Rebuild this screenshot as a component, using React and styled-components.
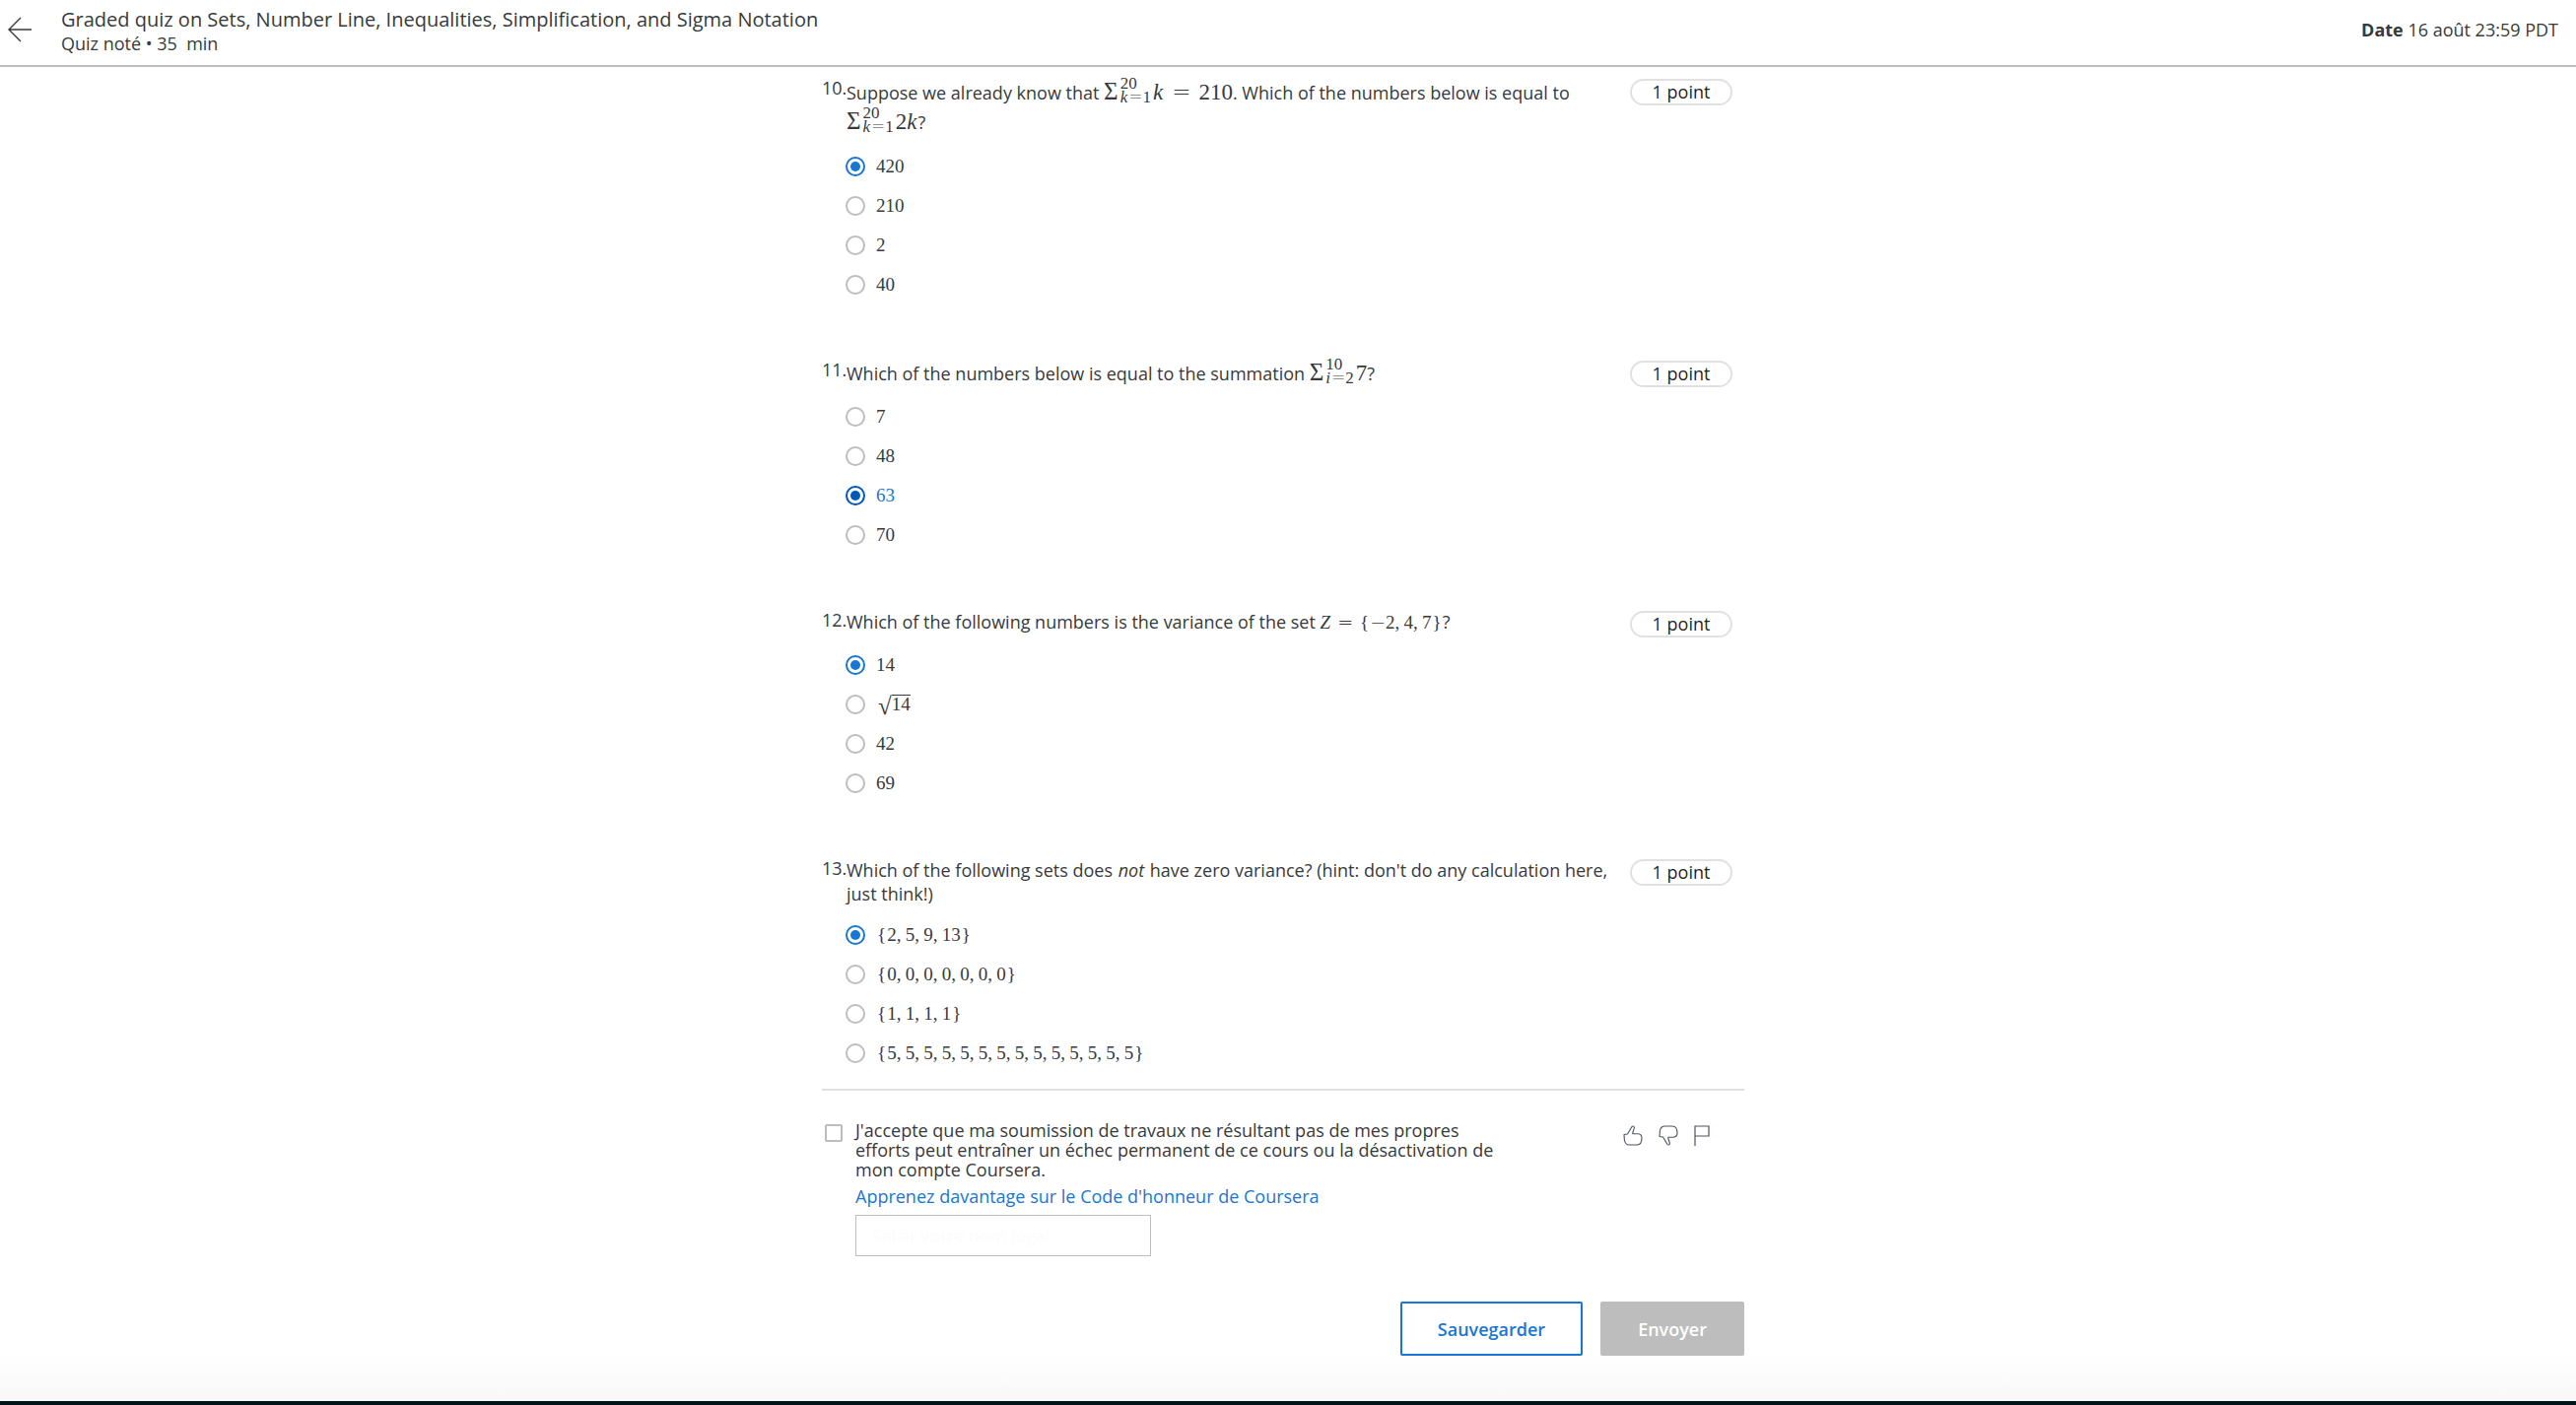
import React, { useState } from "react";
import styled, { createGlobalStyle } from "styled-components";

const ink = "#373a3c";
const blue = "#1976d2";
const grey = "#bdbdbd";
const paleGrey = "#e1e1e1";

const GlobalStyle = createGlobalStyle`
  *, *::before, *::after { box-sizing: border-box; }
  body {
    margin: 0;
    background: #fff;
    color: ${ink};
    font-family: "Open Sans", "Noto Sans", sans-serif;
    font-size: 18px;
  }
`;

const Page = styled.div`
  display: flex;
  flex-direction: column;
  min-height: 100vh;
`;

const Header = styled.header`
  display: flex;
  align-items: center;
  gap: 30px;
  height: 68px;
  padding: 0 18px 6px 8px;
  border-bottom: 2px solid ${grey};
`;

const BackButton = styled.button`
  display: flex;
  padding: 0;
  border: 0;
  background: none;
  color: ${ink};
  cursor: pointer;
`;

const Heading = styled.div`
  flex: 1;
  padding-top: 3px;
`;

const Title = styled.h1`
  margin: 0;
  font-size: 20px;
  font-weight: 400;
  line-height: 24px;
`;

const Subtitle = styled.p`
  margin: 0;
  line-height: 24px;
  white-space: pre;
`;

const DueDate = styled.p`
  margin: 0;
  line-height: 24px;
`;

const Main = styled.main`
  display: flex;
  flex: 1;
  justify-content: center;
  padding: 11px 10px 40px 0;
  background: linear-gradient(to top, #f8f8f8, #fff 48px);
`;

const Form = styled.form`
  width: 100%;
  max-width: 936px;
`;

const QuestionList = styled.ol`
  display: flex;
  flex-direction: column;
  gap: 56px;
  margin: 0;
  padding: 0 0 16px;
  border-bottom: 2px solid ${paleGrey};
  list-style: none;
`;

const Question = styled.li`
  display: grid;
  grid-template-columns: 25px minmax(0, 1fr) 104px;
  padding-right: 12px;
`;

const Number = styled.span`
  line-height: 20px;
`;

const Body = styled.div`
  padding-right: 16px;
`;

const Prompt = styled.p`
  margin: 0 0 10px;
  line-height: 24px;

  em { margin: 0 1px; }
`;

const Points = styled.span`
  align-self: start;
  margin-top: 1px;
  border: 2px solid ${paleGrey};
  border-radius: 14px;
  color: #1f1f1f;
  line-height: 23px;
  text-align: center;
`;

const Option = styled.label`
  display: flex;
  align-items: center;
  gap: 11px;
  height: 40px;
  color: ${(p) => (p.$active ? blue : ink)};
  cursor: pointer;
`;

const Radio = styled.input`
  appearance: none;
  width: 20px;
  height: 20px;
  margin: 0 0 0 -1px;
  padding: 3px;
  border: 2px solid ${grey};
  border-radius: 50%;
  background: #fff;

  &:checked {
    border-color: ${(p) => (p.$active ? "#0057b8" : blue)};
    background: ${(p) => (p.$active ? "#0057b8" : blue)} content-box;
  }
`;

const Math = styled.span`
  font-family: "Liberation Serif", "Times New Roman", serif;
  font-size: ${(p) => (p.$large ? 23 : 19)}px;
  line-height: ${(p) => p.$line || 24}px;
  white-space: nowrap;

  i { margin-right: 1px; }
`;

const Sigma = styled.span`
  font-size: 25px;
  line-height: 0;
`;

const Scripts = styled.span`
  display: inline-flex;
  flex-direction: column;
  margin: -2px 2px 0;
  font-size: 17px;
  line-height: 14px;
  vertical-align: 11px;
`;

const Relation = styled.span`
  margin: 0 ${(p) => p.$gap || 0}px;
  font-family: "DejaVu Sans", sans-serif;
  font-weight: 200;
  line-height: 0;
`;

const Comma = styled.span`
  display: inline-block;
  width: 9px;
`;

const Brace = styled.span`
  margin: 0 1px;
`;

const Root = styled.span`
  margin-left: 2px;
  font-size: 25px;
  line-height: 0;
  vertical-align: -4px;
`;

const Radicand = styled.span`
  display: inline-block;
  border-top: 1px solid currentColor;
  line-height: 18px;
`;

const Honor = styled.section`
  display: grid;
  grid-template-columns: 18px minmax(0, 656px) auto;
  column-gap: 13px;
  padding: 30px 35px 0 3px;
`;

const Checkbox = styled.input`
  appearance: none;
  width: 18px;
  height: 18px;
  margin: 4px 0 0;
  border: 2px solid ${grey};
  border-radius: 2px;
  background: #fff;

  &:checked { background: ${blue}; }
`;

const HonorBody = styled.div`
  display: flex;
  flex-direction: column;
  align-items: flex-start;
`;

const HonorLabel = styled.label`
  line-height: 20px;
`;

const HonorLink = styled.a`
  margin: 5px 0 7px;
  color: ${blue};
  line-height: 24px;
  text-decoration: none;
`;

const NameInput = styled.input`
  width: 300px;
  height: 42px;
  padding: 0 16px;
  border: 1px solid ${grey};
  background: #fff;
  color: ${ink};
  font: inherit;

  &::placeholder { color: #fcfcfc; opacity: 1; }
`;

const Feedback = styled.div`
  display: flex;
  justify-self: end;
  align-self: start;
  gap: 16px;
  padding-top: 5px;
`;

const IconButton = styled.button`
  display: flex;
  padding: 0;
  border: 0;
  background: none;
  color: #4d5261;
  cursor: pointer;
`;

const Actions = styled.div`
  display: flex;
  justify-content: flex-end;
  gap: 18px;
  padding-top: 46px;
`;

const Action = styled.button`
  height: 55px;
  padding: 0 36px;
  border: 2px solid ${(p) => (p.$filled ? grey : blue)};
  border-radius: 2px;
  background: ${(p) => (p.$filled ? grey : "#fff")};
  color: ${(p) => (p.$filled ? "#fff" : blue)};
  font: 600 18px/24px "Open Sans", "Noto Sans", sans-serif;
  cursor: pointer;
`;

const BottomEdge = styled.footer`
  height: 4px;
  background: #02141a;
`;

const thumbPath =
  "M1 9.5 L4.5 9 L9 1.5 C9.700 .5 11.600 1 11.300 3 C11 5 9.600 6.500 9.800 8.800 L15 8.800 C18 9 19 10.500 19 13 C19 17 17.500 20 14 20 L6.500 20 C3 20 1.800 18 1.400 15 Z";

function ThumbIcon({ down }) {
  return (
    <svg width="20" height="21" viewBox="0 0 20 21" fill="none" stroke="currentColor" strokeWidth="1.1" strokeLinejoin="round">
      <path d={thumbPath} transform={down ? "matrix(1 0 0 -1 0 21)" : undefined} />
    </svg>
  );
}

function SetOf({ items }) {
  return (
    <>
      <Brace>{"{"}</Brace>
      {items.map((item, i) => (
        <React.Fragment key={i}>
          {item}
          {i < items.length - 1 && <Comma>,</Comma>}
        </React.Fragment>
      ))}
      <Brace>{"}"}</Brace>
    </>
  );
}

function Sum({ index, from, to }) {
  return (
    <>
      <Sigma>Σ</Sigma>
      <Scripts>
        <span>{to}</span>
        <span>
          <i>{index}</i>
          <Relation>=</Relation>
          {from}
        </span>
      </Scripts>
    </>
  );
}

const questions = [
  {
    number: 10,
    prompt: (
      <>
        Suppose we already know that{" "}
        <Math $large $line={30}>
          <Sum index="k" from="1" to="20" />
          <i>k</i>
          <Relation $gap={8}>=</Relation>
          210
        </Math>
        . Which of the numbers below is equal to{" "}
        <Math $large $line={30}>
          <Sum index="k" from="1" to="20" />2<i>k</i>
        </Math>
        ?
      </>
    ),
    options: ["420", "210", "2", "40"],
    answer: 0,
  },
  {
    number: 11,
    prompt: (
      <>
        Which of the numbers below is equal to the summation{" "}
        <Math $large $line={28}>
          <Sum index="i" from="2" to="10" />7
        </Math>
        ?
      </>
    ),
    options: ["7", "48", "63", "70"],
    answer: 2,
    active: 2,
  },
  {
    number: 12,
    prompt: (
      <>
        Which of the following numbers is the variance of the set{" "}
        <Math $line={26}>
          <i>Z</i>
          <Relation $gap={6}>=</Relation>
          <SetOf
            items={[
              <>
                <Relation>−</Relation>2
              </>,
              "4",
              "7",
            ]}
          />
        </Math>
        ?
      </>
    ),
    options: [
      "14",
      <>
        <Root>√</Root>
        <Radicand>14</Radicand>
      </>,
      "42",
      "69",
    ],
    answer: 0,
  },
  {
    number: 13,
    prompt: (
      <>
        Which of the following sets does <em>not</em> have zero variance? (hint: don't do any
        calculation here, just think!)
      </>
    ),
    options: [
      <SetOf items={[2, 5, 9, 13]} />,
      <SetOf items={Array(7).fill(0)} />,
      <SetOf items={Array(4).fill(1)} />,
      <SetOf items={Array(14).fill(5)} />,
    ],
    answer: 0,
  },
];

function QuestionItem({ number, prompt, options, answer, active }) {
  const [selected, setSelected] = useState(answer);
  return (
    <Question>
      <Number>{number}.</Number>
      <Body>
        <Prompt>{prompt}</Prompt>
        {options.map((option, i) => (
          <Option key={i} $active={active === i}>
            <Radio
              type="radio"
              name={`question-${number}`}
              checked={selected === i}
              onChange={() => setSelected(i)}
              $active={active === i}
            />
            <Math>{option}</Math>
          </Option>
        ))}
      </Body>
      <Points>1 point</Points>
    </Question>
  );
}

export default function App() {
  return (
    <Page>
      <GlobalStyle />
      <Header>
        <BackButton type="button" aria-label="Retour">
          <svg width="24" height="26" viewBox="0 0 24 26" fill="none" stroke="currentColor" strokeWidth="1.4">
            <path d="M13 1 L1 13 L13 25 M1 13 H24" />
          </svg>
        </BackButton>
        <Heading>
          <Title>Graded quiz on Sets, Number Line, Inequalities, Simplification, and Sigma Notation</Title>
          <Subtitle>{"Quiz noté • 35  min"}</Subtitle>
        </Heading>
        <DueDate>
          <b>Date</b> 16 août 23:59 PDT
        </DueDate>
      </Header>
      <Main>
        <Form onSubmit={(e) => e.preventDefault()}>
          <QuestionList>
            {questions.map((q) => (
              <QuestionItem key={q.number} {...q} />
            ))}
          </QuestionList>
          <Honor>
            <Checkbox id="honor" type="checkbox" />
            <HonorBody>
              <HonorLabel htmlFor="honor">
                J'accepte que ma soumission de travaux ne résultant pas de mes propres efforts peut
                entraîner un échec permanent de ce cours ou la désactivation de mon compte Coursera.
              </HonorLabel>
              <HonorLink href="#honor-code">Apprenez davantage sur le Code d'honneur de Coursera</HonorLink>
              <NameInput type="text" placeholder="Saisir votre nom légal" aria-label="Saisir votre nom légal" />
            </HonorBody>
            <Feedback>
              <IconButton type="button" aria-label="J'aime">
                <ThumbIcon />
              </IconButton>
              <IconButton type="button" aria-label="Je n'aime pas">
                <ThumbIcon down />
              </IconButton>
              <IconButton type="button" aria-label="Signaler">
                <svg width="16" height="21" viewBox="0 0 16 21" fill="none" stroke="currentColor" strokeWidth="1.2">
                  <path d="M1 21 V1 H15 V11 H1" />
                </svg>
              </IconButton>
            </Feedback>
          </Honor>
          <Actions>
            <Action type="button">Sauvegarder</Action>
            <Action type="submit" $filled>
              Envoyer
            </Action>
          </Actions>
        </Form>
      </Main>
      <BottomEdge />
    </Page>
  );
}
